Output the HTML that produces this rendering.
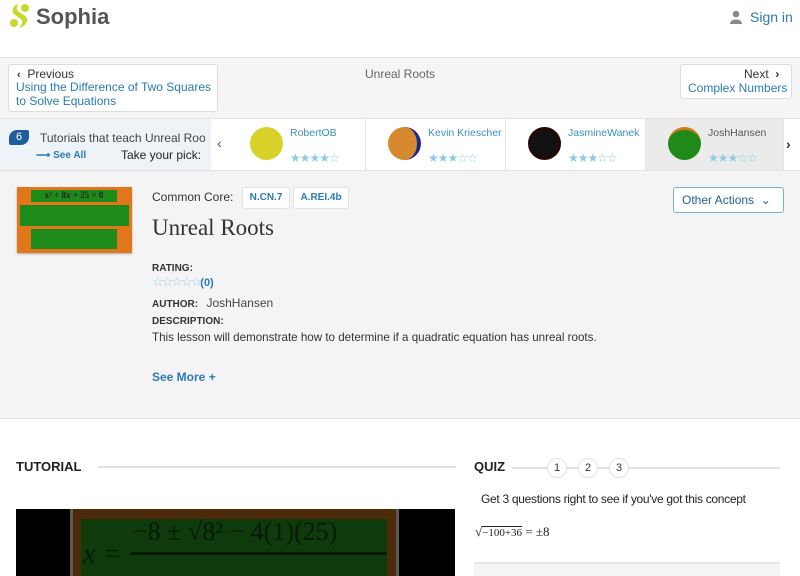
<!DOCTYPE html>
<html><head><meta charset="utf-8"><style>
*{box-sizing:border-box;margin:0;padding:0}
body{width:800px;height:576px;overflow:hidden;font-family:"Liberation Sans",sans-serif;background:#fff;position:relative;color:#333}
.a{position:absolute}
.blue{color:#2a7ab8}
.hand{font-family:"Comic Sans MS","Liberation Sans",cursive}
.card{position:absolute;top:119px;height:51px;background:#fff;border-right:1px solid #e4e4e4}
.card .av{position:absolute;left:22px;top:8px;width:33px;height:33px;border-radius:50%}
.card .n{position:absolute;left:62px;top:8px;font-size:10.5px;color:#3a8fc4;white-space:nowrap}
.card .s{position:absolute;left:62px;top:32px;font-size:12px;color:#8fcbe4;letter-spacing:-1px}
</style></head><body>
<!-- header -->
<svg class="a" style="left:9px;top:3px" width="22" height="26" viewBox="0 0 22 26"><path d="M9 1 C3 3 2 9 6 12 L13 17 C14 19 12 23 10 25 C17 23 21 17 16 13 L9 8 C7 6 8 3 9 1Z" fill="#c6d92c"/><circle cx="5" cy="20" r="4" fill="#c6d92c"/><circle cx="16" cy="5" r="4" fill="#c6d92c"/></svg>
<div class="a" style="left:36px;top:4px;font-size:22px;font-weight:bold;color:#555">Sophia</div>
<svg class="a" style="left:729px;top:10px" width="14" height="14" viewBox="0 0 14 14"><circle cx="7" cy="4" r="3.3" fill="#888"/><path d="M1 14 C1 8 13 8 13 14Z" fill="#888"/></svg>
<div class="a blue" style="left:750px;top:9px;font-size:14px">Sign in</div>
<div class="a" style="left:0;top:57px;width:800px;height:61px;background:#f5f5f5;border-top:1px solid #e2e2e2"></div>
<div class="a" style="left:8px;top:64px;width:210px;height:48px;background:#fff;border:1px solid #ddd;border-radius:3px"></div>
<div class="a" style="left:17px;top:67px;font-size:12px;color:#333"><b style="font-size:11px">‹</b>&nbsp; Previous</div>
<div class="a blue" style="left:16px;top:81px;font-size:12px;line-height:13.5px">Using the Difference of Two Squares<br>to Solve Equations</div>
<div class="a" style="left:365px;top:67px;font-size:12px;color:#666">Unreal Roots</div>
<div class="a" style="left:680px;top:64px;width:112px;height:35px;background:#fff;border:1px solid #ddd;border-radius:3px"></div>
<div class="a" style="left:744px;top:67px;font-size:12px">Next &nbsp;<b>›</b></div>
<div class="a blue" style="left:688px;top:81px;font-size:12px">Complex Numbers</div>
<!-- carousel -->
<div class="a" style="left:0;top:118px;width:800px;height:53px;background:#fff;border-top:1px solid #e2e2e2;border-bottom:1px solid #e2e2e2"></div>
<div class="a" style="left:0;top:119px;width:211px;height:51px;background:#eef3f8"></div>
<div class="a" style="left:9px;top:130px;width:20px;height:15px;background:#1d5e9a;border-radius:8px 2px 8px 2px;color:#fff;font-size:11px;text-align:center;line-height:15px">6</div>
<div class="a" style="left:40px;top:131px;font-size:12px;color:#444;white-space:nowrap;width:165px;overflow:hidden">Tutorials that teach Unreal Root</div>
<div class="a blue" style="left:36px;top:150px;font-size:10px;font-weight:bold">⟶ See All</div>
<div class="a hand" style="left:121px;top:148px;font-size:12px;color:#222">Take your pick:</div>
<div class="a" style="left:211px;top:119px;width:17px;height:51px;background:#fff;font-size:14px;text-align:center;line-height:48px;color:#555">‹</div>
<div class="card" style="left:228px;width:138px"><div class="av" style="background:#d8d12a"></div><div class="n">RobertOB</div><div class="s">★★★★☆</div></div>
<div class="card" style="left:366px;width:140px"><div class="av" style="background:#d6892e;border-right:4px solid #1a2a8c"></div><div class="n">Kevin Kriescher</div><div class="s">★★★☆☆</div></div>
<div class="card" style="left:506px;width:140px"><div class="av" style="background:#111;border:2px solid #300"></div><div class="n">JasmineWanek</div><div class="s">★★★☆☆</div></div>
<div class="card" style="left:646px;width:138px;background:#ebebeb"><div class="av" style="background:#1f8a18;border-top:3px solid #d47a1a"></div><div class="n" style="color:#555">JoshHansen</div><div class="s">★★★☆☆</div></div>
<div class="a" style="left:786px;top:136px;font-size:14px;font-weight:bold">›</div>
<!-- info -->
<div class="a" style="left:0;top:171px;width:800px;height:248px;background:#f4f4f4;border-bottom:1px solid #e2e2e2"></div>
<div class="a" style="left:17px;top:187px;width:115px;height:66px;background:#e2761a;box-shadow:0 1px 2px #aaa">
<div class="a" style="left:14px;top:3px;width:86px;height:12px;background:#1e8a1a;font:bold 9px 'Liberation Serif',serif;text-align:center;color:#222">x² + 8x + 25 = 0</div>
<div class="a" style="left:3px;top:18px;width:109px;height:21px;background:#1e8a1a"></div>
<div class="a" style="left:14px;top:42px;width:86px;height:20px;background:#1e8a1a"></div></div>
<div class="a" style="left:152px;top:190px;font-size:12px;color:#333">Common Core:</div>
<div class="a blue" style="left:242px;top:187px;width:48px;height:22px;background:#fff;border:1px solid #e2e2e2;border-radius:3px;font-size:10px;font-weight:bold;text-align:center;line-height:20px">N.CN.7</div>
<div class="a blue" style="left:293px;top:187px;width:56px;height:22px;background:#fff;border:1px solid #e2e2e2;border-radius:3px;font-size:10px;font-weight:bold;text-align:center;line-height:20px">A.REI.4b</div>
<div class="a" style="left:152px;top:215px;font:23px 'Liberation Serif',serif;color:#333">Unreal Roots</div>
<div class="a" style="left:673px;top:187px;width:111px;height:26px;background:#fff;border:1px solid #7ab0d4;border-radius:3px;font-size:12px;color:#1f5f91;line-height:24px;padding-left:8px">Other Actions &nbsp;⌄</div>
<div class="a" style="left:152px;top:263px;font-size:10px;font-weight:bold;color:#333">RATING:</div>
<div class="a" style="left:152px;top:274px;font-size:13px;color:#9ccce6;letter-spacing:-2px">☆☆☆☆☆<b class="blue" style="letter-spacing:0;font-size:11px">(0)</b></div>
<div class="a" style="left:152px;top:296px;font-size:10px;font-weight:bold">AUTHOR: &nbsp;&nbsp;<span style="font-weight:normal;font-size:12px;color:#444">JoshHansen</span></div>
<div class="a" style="left:152px;top:316px;font-size:10px;font-weight:bold">DESCRIPTION:</div>
<div class="a" style="left:152px;top:331px;font-size:11.6px;color:#333">This lesson will demonstrate how to determine if a quadratic equation has unreal roots.</div>
<div class="a blue" style="left:152px;top:370px;font-size:12px;font-weight:bold">See More +</div>
<!-- tutorial -->
<div class="a" style="left:16px;top:459px;font-size:13px;font-weight:bold;color:#222">TUTORIAL</div>
<div class="a" style="left:98px;top:466px;width:358px;height:2px;background:#e2e2e2"></div>
<div class="a" style="left:16px;top:509px;width:439px;height:67px;background:#000"></div>
<div class="a" style="left:70px;top:509px;width:329px;height:67px;background:#5a5a5a"></div>
<div class="a" style="left:73px;top:509px;width:323px;height:67px;background:#4d2a0a"></div>
<div class="a" style="left:81px;top:519px;width:306px;height:57px;background:#0f3a0c;overflow:hidden">
<div class="a" style="left:52px;top:-2px;font:26px 'Liberation Serif',serif;color:#061a06;white-space:nowrap">−8 ± √8² − 4(1)(25)</div>
<div class="a" style="left:50px;top:33px;width:256px;height:3px;background:#061a06"></div>
<div class="a" style="left:2px;top:20px;font:italic 28px 'Liberation Serif',serif;color:#061a06">x =</div></div>
<!-- quiz -->
<div class="a" style="left:474px;top:459px;font-size:13px;font-weight:bold;color:#222">QUIZ</div>
<div class="a" style="left:512px;top:467px;width:268px;height:2px;background:#e2e2e2"></div>
<div class="a" style="left:547px;top:458px;width:20px;height:20px;border-radius:50%;background:#fff;border:1px solid #e2e2e2;font-size:11px;text-align:center;line-height:18px">1</div>
<div class="a" style="left:578px;top:458px;width:20px;height:20px;border-radius:50%;background:#fff;border:1px solid #e2e2e2;font-size:11px;text-align:center;line-height:18px">2</div>
<div class="a" style="left:609px;top:458px;width:20px;height:20px;border-radius:50%;background:#fff;border:1px solid #e2e2e2;font-size:11px;text-align:center;line-height:18px">3</div>
<div class="a hand" style="left:481px;top:492px;font-size:12px;color:#222;letter-spacing:-0.3px">Get 3 questions right to see if you've got this concept</div>
<div class="a" style="left:475px;top:524px;font:13px 'Liberation Serif',serif;color:#222">√<span style="border-top:1px solid #222;font-size:11px">−100+36</span> = ±8</div>
<div class="a" style="left:474px;top:562px;width:306px;height:14px;background:#f4f4f4;border-top:2px solid #e6e6e6"></div>
</body></html>
